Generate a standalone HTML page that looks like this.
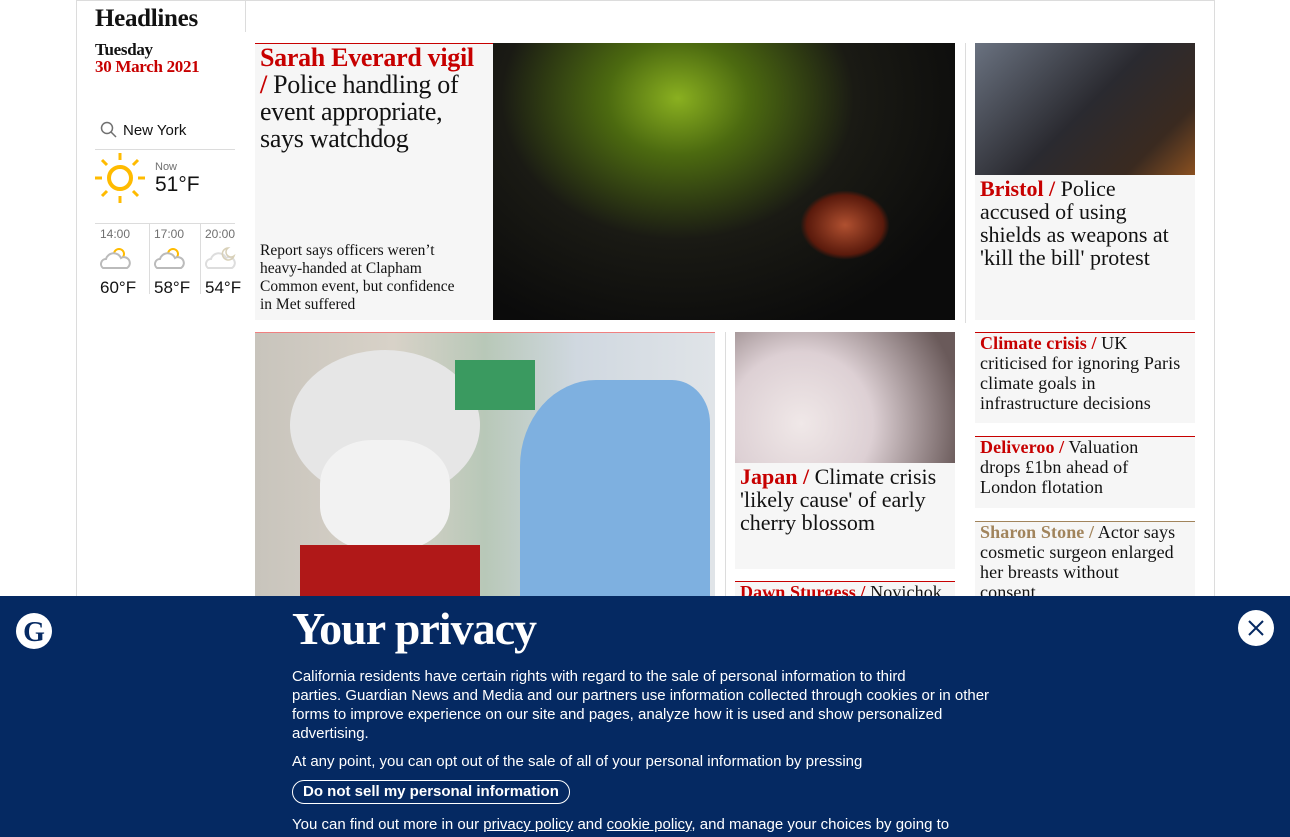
<!DOCTYPE html>
<html><head><meta charset="utf-8"><style>
*{margin:0;padding:0;box-sizing:border-box}
body{width:1290px;height:837px;overflow:hidden;background:#fff;position:relative;font-family:"Liberation Serif",serif;color:#121212}
.a{position:absolute;white-space:nowrap}
.wrap{left:76px;top:0;width:1139px;height:837px;border-left:1px solid #dcdcdc;border-right:1px solid #dcdcdc;border-top:1px solid #dcdcdc}
.k{color:#c70000;font-weight:700}
.card{background:#f6f6f6;border-top:1px solid #c70000}
.h{font-size:22px;line-height:23px;letter-spacing:0px}
.h2{font-size:18px;line-height:20px;letter-spacing:0.1px}
.sans{font-family:"Liberation Sans",sans-serif}
.banner{left:0;top:596px;width:1290px;height:241px;background:#052962;color:#fff}
.banner p{font-family:"Liberation Sans",sans-serif;font-size:15px;line-height:19px;position:absolute;left:292px;white-space:nowrap}
</style></head><body>
<div class="a wrap"></div>
<div class="a" style="left:245px;top:0;width:1px;height:32px;background:#dcdcdc"></div>
<div class="a" style="left:95px;top:5px;font-weight:700;font-size:25px;letter-spacing:-0.3px">Headlines</div>
<div class="a" style="left:95px;top:41px;font-weight:700;font-size:17px;line-height:17px;letter-spacing:-0.3px">Tuesday<br><span style="color:#c70000">30 March 2021</span></div>
<svg class="a" style="left:100px;top:121px" width="18" height="18" viewBox="0 0 18 18"><circle cx="7" cy="7" r="5.5" fill="none" stroke="#707070" stroke-width="1.5"/><path d="M11 11l5 5" stroke="#707070" stroke-width="1.5"/></svg>
<div class="a sans" style="left:123px;top:122px;font-size:15px">New York</div>
<div class="a" style="left:95px;top:149px;width:140px;height:1px;background:#dcdcdc"></div>
<svg class="a" style="left:94px;top:152px" width="52" height="52" viewBox="0 0 52 52"><circle cx="26" cy="26" r="11" fill="none" stroke="#ffbb00" stroke-width="4"/><g stroke="#ffbb00" stroke-width="3"><path d="M26 1v7M26 44v7M1 26h7M44 26h7M8 8l5 5M39 39l5 5M44 8l-5 5M13 39l-5 5"/></g></svg>
<div class="a sans" style="left:155px;top:161px;font-size:11px;color:#707070">Now</div>
<div class="a sans" style="left:155px;top:173px;font-size:21px">51°F</div>
<div class="a" style="left:95px;top:223px;width:140px;height:1px;background:#dcdcdc"></div>
<div class="a" style="left:149px;top:224px;width:1px;height:70px;background:#dcdcdc"></div>
<div class="a" style="left:200px;top:224px;width:1px;height:70px;background:#dcdcdc"></div>
<div class="a sans" style="left:100px;top:227px;font-size:12px;color:#707070">14:00</div>
<div class="a sans" style="left:154px;top:227px;font-size:12px;color:#707070">17:00</div>
<div class="a sans" style="left:205px;top:227px;font-size:12px;color:#707070">20:00</div>
<svg class="a" style="left:99px;top:244px" width="34" height="28"><circle cx="20" cy="10" r="5" fill="none" stroke="#ffbb00" stroke-width="2"/><path d="M4 24a5 5 0 0 1 3-9 8 8 0 0 1 15-1 5 5 0 0 1 6 10z" fill="#fff" stroke="#bbb" stroke-width="2"/></svg>
<svg class="a" style="left:153px;top:244px" width="34" height="28"><circle cx="20" cy="10" r="5" fill="none" stroke="#ffbb00" stroke-width="2"/><path d="M4 24a5 5 0 0 1 3-9 8 8 0 0 1 15-1 5 5 0 0 1 6 10z" fill="#fff" stroke="#bbb" stroke-width="2"/></svg>
<svg class="a" style="left:204px;top:244px" width="34" height="28"><path d="M4 24a5 5 0 0 1 3-9 8 8 0 0 1 15-1 5 5 0 0 1 6 10z" fill="#fff" stroke="#ddd" stroke-width="2"/><path d="M24 4a6 6 0 1 0 6 8 5 5 0 0 1-6-8z" fill="none" stroke="#d8d0b8" stroke-width="1.5"/></svg>
<div class="a sans" style="left:100px;top:278px;font-size:17px">60°F</div>
<div class="a sans" style="left:154px;top:278px;font-size:17px">58°F</div>
<div class="a sans" style="left:205px;top:278px;font-size:17px">54°F</div>

<div class="a card" style="left:255px;top:43px;width:238px;height:277px"></div>
<div class="a" style="left:260px;top:44px;font-size:26px;line-height:27px;letter-spacing:-0.3px"><span class="k">Sarah Everard vigil</span><br><span class="k">/</span> Police handling of<br>event appropriate,<br>says watchdog</div>
<div class="a" style="left:260px;top:242px;font-size:15.5px;line-height:18px">Report says officers weren’t<br>heavy-handed at Clapham<br>Common event, but confidence<br>in Met suffered</div>
<div class="a" style="left:493px;top:43px;width:462px;height:277px;background:radial-gradient(ellipse at 40% 20%,#8ab020 0,#4c6a10 18%,#1a1a14 45%,#0b0b0b 80%)"></div>
<div class="a" style="left:800px;top:190px;width:90px;height:70px;border-radius:50%;background:radial-gradient(#b05030,#5a1a0c 60%,transparent 70%)"></div>
<div class="a" style="left:965px;top:43px;width:1px;height:280px;background:#dcdcdc"></div>
<div class="a" style="left:975px;top:43px;width:220px;height:132px;background:linear-gradient(135deg,#6a7280,#2a2a30 50%,#3a2a20 80%,#8a5020)"></div>
<div class="a" style="left:975px;top:175px;width:220px;height:145px;background:#f6f6f6"></div>
<div class="a h" style="left:980px;top:177px"><span class="k">Bristol /</span> Police<br>accused of using<br>shields as weapons at<br>'kill the bill' protest</div>

<div class="a" style="left:255px;top:332px;width:460px;height:264px;background:linear-gradient(90deg,#c8c4bc 0,#d8d2c8 30%,#b8c8b8 50%,#d0d8e0 70%,#e0e4e8 100%);border-top:1px solid #f08080"></div>
<div class="a" style="left:290px;top:350px;width:190px;height:150px;border-radius:50%;background:#e6e6e6"></div>
<div class="a" style="left:320px;top:440px;width:130px;height:110px;border-radius:40%;background:#f2f2f2"></div>
<div class="a" style="left:300px;top:545px;width:180px;height:51px;background:#b01818"></div>
<div class="a" style="left:520px;top:380px;width:190px;height:216px;border-radius:40% 20% 0 0;background:#7eb0e0"></div>
<div class="a" style="left:455px;top:360px;width:80px;height:50px;background:#3a9a60"></div>
<div class="a" style="left:725px;top:332px;width:1px;height:264px;background:#dcdcdc"></div>
<div class="a" style="left:735px;top:332px;width:220px;height:131px;background:radial-gradient(circle at 30% 70%,#f0e8e8,#ddd0d4 40%,#6a5a5a 90%)"></div>
<div class="a" style="left:735px;top:463px;width:220px;height:106px;background:#f6f6f6"></div>
<div class="a h" style="left:740px;top:465px"><span class="k">Japan /</span> Climate crisis<br>'likely cause' of early<br>cherry blossom</div>
<div class="a card" style="left:735px;top:581px;width:220px;height:15px"></div>
<div class="a h2" style="left:740px;top:582px;height:14px;overflow:hidden"><span class="k">Dawn Sturgess /</span> Novichok</div>
<div class="a card" style="left:975px;top:332px;width:220px;height:91px"></div>
<div class="a h2" style="left:980px;top:333px"><span class="k">Climate crisis /</span> UK<br>criticised for ignoring Paris<br>climate goals in<br>infrastructure decisions</div>
<div class="a card" style="left:975px;top:436px;width:220px;height:72px"></div>
<div class="a h2" style="left:980px;top:437px"><span class="k">Deliveroo /</span> Valuation<br>drops £1bn ahead of<br>London flotation</div>
<div class="a card" style="left:975px;top:521px;width:220px;height:75px;border-top-color:#a1845c"></div>
<div class="a h2" style="left:980px;top:522px;height:74px;overflow:hidden"><span style="color:#a1845c;font-weight:700">Sharon Stone /</span> Actor says<br>cosmetic surgeon enlarged<br>her breasts without<br>consent</div>

<div class="a banner">
<svg class="a" style="left:15px;top:16px" width="38" height="38" viewBox="0 0 38 38"><circle cx="19" cy="19" r="18" fill="#fff"/><text x="19" y="29" text-anchor="middle" font-family="Liberation Serif" font-weight="700" font-size="28" fill="#052962">G</text></svg>
<div class="a" style="left:292px;top:6px;font-family:'Liberation Serif',serif;font-weight:700;font-size:46px;letter-spacing:-1px">Your privacy</div>
<p style="top:71px">California residents have certain rights with regard to the sale of personal information to third<br>parties. Guardian News and Media and our partners use information collected through cookies or in other<br>forms to improve experience on our site and pages, analyze how it is used and show personalized<br>advertising.</p>
<p style="top:156px">At any point, you can opt out of the sale of all of your personal information by pressing</p>
<div class="a sans" style="left:292px;top:184px;height:24px;padding:0 10px;border:1px solid #fff;border-radius:12px;font-weight:700;font-size:15px;line-height:22px">Do not sell my personal information</div>
<p style="top:219px">You can find out more in our <u>privacy policy</u> and <u>cookie policy</u>, and manage your choices by going to</p>
<svg class="a" style="left:1238px;top:14px" width="36" height="36"><circle cx="18" cy="18" r="18" fill="#fff"/><path d="M11 11l14 14M25 11L11 25" stroke="#052962" stroke-width="2"/></svg>
</div>
</body></html>
